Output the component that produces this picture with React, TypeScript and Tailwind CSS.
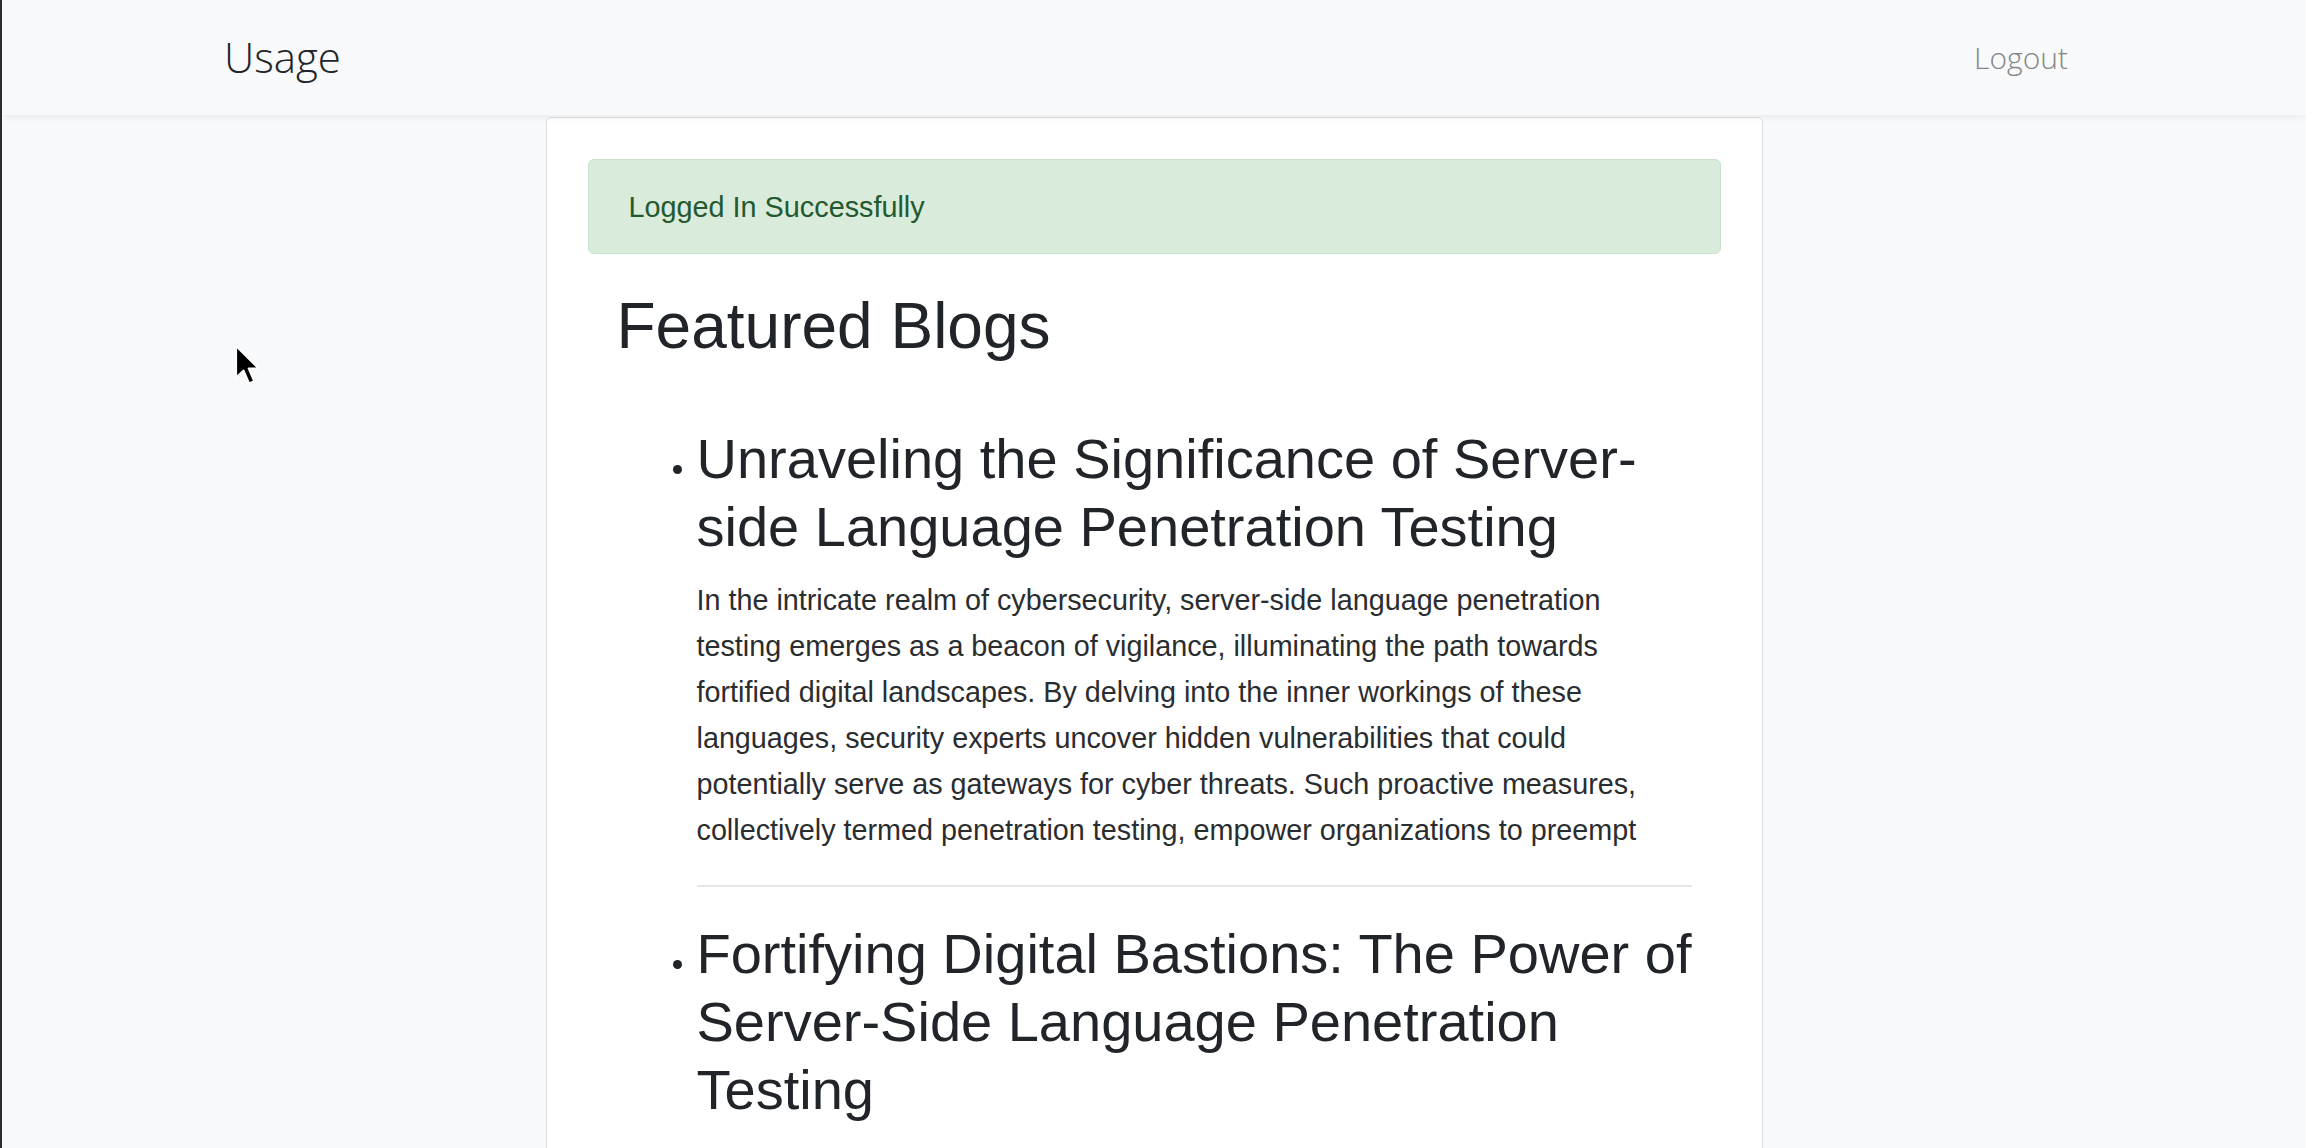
const blogs = [
  {
    title: "Unraveling the Significance of Server-side Language Penetration Testing",
    body: "In the intricate realm of cybersecurity, server-side language penetration testing emerges as a beacon of vigilance, illuminating the path towards fortified digital landscapes. By delving into the inner workings of these languages, security experts uncover hidden vulnerabilities that could potentially serve as gateways for cyber threats. Such proactive measures, collectively termed penetration testing, empower organizations to preempt",
  },
  {
    title: "Fortifying Digital Bastions: The Power of Server-Side Language Penetration Testing",
    body: "",
  },
];

function Cursor() {
  return (
    <svg
      className="absolute left-[233px] top-[345px] w-[27px] h-[42px]"
      viewBox="0 0 22 34"
    >
      <path
        d="M1 1 L1 26 L7 20.5 L11.5 31 L15.5 29.3 L11 19 L19 19 Z"
        fill="#000"
        stroke="#fff"
        strokeWidth="1.4"
        strokeLinejoin="round"
      />
    </svg>
  );
}

export default function App() {
  return (
    <div className="relative h-[1148px] overflow-hidden bg-[#f8f9fa] border-l-2 border-[#2b2b30] font-['Liberation_Sans',Arial,sans-serif] text-[#212529]">
      <nav className="relative z-10 h-[115px] flex items-center justify-between pl-[222px] pr-[238px] bg-[#f8f9fa] shadow-[0_3px_6px_rgba(0,0,0,0.05)] font-['Open_Sans',sans-serif] font-light">
        <span className="text-[42px] text-[#212529] -mt-[3px]">Usage</span>
        <span className="text-[30px] text-[#858585]">Logout</span>
      </nav>

      <main className="flex justify-center pt-[2px]">
        <div className="w-[1217px] bg-white border border-[#dedede] rounded-[5px] px-[41px] pt-[41px] pb-10">
          <div className="h-[95px] flex items-center px-[40px] pt-[2px] rounded-[6px] bg-[#d9ebdb] border border-[#c8e3cc] text-[28.8px] text-[#24592f]">
            Logged In Successfully
          </div>

          <h1 className="mt-[34px] pl-[29px] text-[64px] leading-[77px]">Featured Blogs</h1>

          <ul className="list-disc pl-[109px] mt-[60px] text-[28.75px]">
            {blogs.map((blog, idx) => (
              <li key={idx} className={idx > 0 ? "mt-[33px]" : ""}>
                <h2 className="text-[56px] leading-[68px] max-w-[995px]">{blog.title}</h2>
                {blog.body && (
                  <>
                    <p className="mt-[16px] leading-[46px] max-w-[995px] text-[#2a2d30]">{blog.body}</p>
                    <hr className="mt-[32px] border-t-2 border-[#e6e6e6] w-[995px]" />
                  </>
                )}
              </li>
            ))}
          </ul>
        </div>
      </main>

      <Cursor />
    </div>
  );
}
